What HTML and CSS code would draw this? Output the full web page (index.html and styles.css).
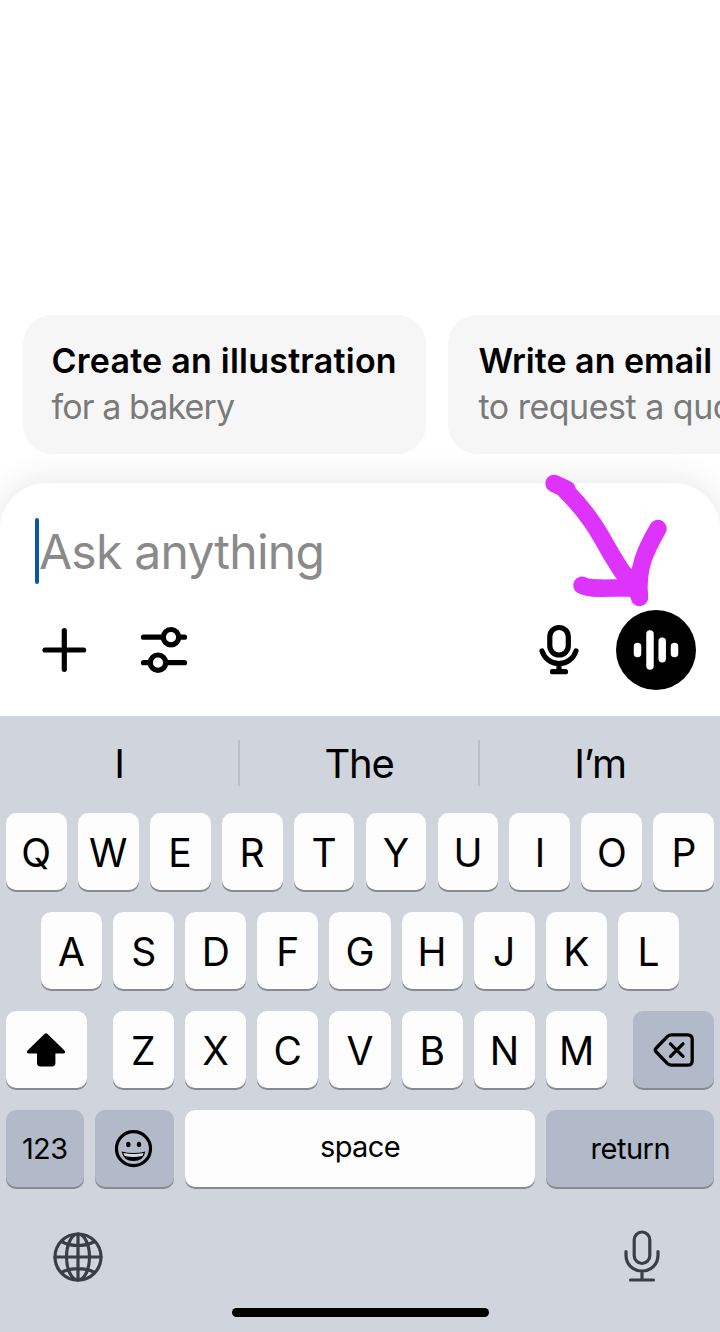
FILE: index.html
```html
<!DOCTYPE html>
<html lang="en">
<head>
<meta charset="utf-8">
<title>Chat</title>
<link rel="stylesheet" href="styles.css">
</head>
<body>
<main class="screen">
  <section class="suggestions">
    <article class="card"><h2 class="card-title">Create an illustration</h2><p class="card-sub">for a bakery</p></article>
    <article class="card card-next"><h2 class="card-title title-next">Write an email</h2><p class="card-sub sub-next">to request a quote</p></article>
  </section>

  <section class="composer">
    <div class="field"><span class="caret"></span><span class="placeholder">Ask anything</span></div>
    <div class="tools">
      <svg class="icon-plus" width="44" height="44" viewBox="0 0 44 44"><path d="M22.300 2.700v38.600M3 22h38.600"/></svg>
      <svg class="icon-sliders" width="48" height="48" viewBox="0 0 48 48"><path d="M3.500 11.200h19M39.500 11.200h5M3.500 36.700h5M26 36.700h18.500"/><circle cx="31" cy="11.200" r="7.700"/><circle cx="18" cy="36.700" r="7.700"/></svg>
      <svg class="icon-mic" width="40" height="50" viewBox="0 0 40 50"><rect x="9.800" y="2.500" width="18.500" height="27.500" rx="9.250"/><path d="M2 26c2.500 7.500 9 12.700 17 12.700S33.500 33.500 36 26M19 39v7M12.500 46.700h13"/></svg>
      <div class="voice">
        <svg width="46" height="40" viewBox="0 0 46 40"><path d="M4.500 16.500v7M17 4v32M29.200 11.200v17.600M41.500 16.500v7"/></svg>
      </div>
    </div>
  </section>

  <section class="keyboard">
    <div class="predictions"><span>I</span><span>The</span><span>I’m</span></div>
    <div class="row row-top"><b>Q</b><b>W</b><b>E</b><b>R</b><b>T</b><b>Y</b><b>U</b><b>I</b><b>O</b><b>P</b></div>
    <div class="row row-home"><b>A</b><b>S</b><b>D</b><b>F</b><b>G</b><b>H</b><b>J</b><b>K</b><b>L</b></div>
    <div class="row row-shift">
      <b class="shift"><svg width="40" height="36" viewBox="0 0 40 36"><path d="M18.200 2.200q1.800-1.700 3.600 0L38.500 18.500q1.600 3-1 3H29.400V31q0 3.400-3.400 3.400H14.400Q11 34.400 11 31V21.500H2.500q-2.600 0-1-3z"/></svg></b>
      <div class="letters"><b>Z</b><b>X</b><b>C</b><b>V</b><b>B</b><b>N</b><b>M</b></div>
      <b class="dark delete"><svg width="42" height="36" viewBox="0 0 42 36"><path d="M18.500 2.800h16.200q4.500 0 4.500 4.500v21.400q0 4.500-4.500 4.500H18.500q-2.300 0-4-1.600L3.300 20q-2-2 0-4L14.500 4.400q1.700-1.600 4-1.600z"/><path d="m17.500 11.800 12.500 12.500m0-12.500-12.500 12.500"/></svg></b>
    </div>
    <div class="row row-bottom">
      <b class="dark num">123</b>
      <b class="dark emoji"><svg width="38" height="38" viewBox="0 0 38 38"><circle cx="18.500" cy="18.700" r="17" class="face"/><ellipse cx="13.300" cy="14.500" rx="2.200" ry="2.700"/><ellipse cx="24" cy="14.500" rx="2.200" ry="2.700"/><path d="M6.700 21.500q11.800 3 23.600 0-1.600 9.600-11.800 9.600T6.700 21.500z"/><path class="teeth" d="M8.500 22.900q10 2.300 20 0-.4 2.300-1.500 3.200-8.500 1.800-17 0-1.100-.9-1.500-3.200z"/></svg></b>
      <b class="space">space</b>
      <b class="dark return">return</b>
    </div>
    <div class="footer">
      <svg class="globe" width="50" height="50" viewBox="0 0 50 50"><circle cx="25" cy="25" r="23"/><ellipse cx="25" cy="25" rx="11.500" ry="23"/><path d="M25 2v46M2 25h46M8.500 9.500c9 5.300 24 5.300 33 0M8.500 40.500c9-5.300 24-5.300 33 0"/></svg>
      <svg class="dictate" width="36" height="54" viewBox="0 0 36 54"><rect x="10.200" y="2" width="15.600" height="31.500" rx="7.800"/><path d="M2 21.500v3.500c0 9 6.500 16 16 16s16-7 16-16v-3.500M18 41v9M6.500 50h23"/></svg>
    </div>
    <div class="home"></div>
  </section>

  <svg class="arrow" width="720" height="300" viewBox="0 450 720 300"><g>
    <path d="M554 483.500 567 489.500"/>
    <path d="M565.500 490.500C581 506 592 520 602 538C614 560 625 577 637 592"/>
    <path d="M658 528.500C645 551 636.500 569 639.500 597.500"/>
    <path d="M582 585.300C590 590 606 587.500 637 588"/>
    <path d="M630 577l5 10"/>
  </g></svg>
</main>
</body>
</html>
```
FILE: styles.css
```css
* { box-sizing: border-box; }
body { margin: 0; background: #fff; font-family: Inter, "Liberation Sans", sans-serif; }
.screen { position: relative; width: 720px; height: 1332px; overflow: hidden; display: flex; flex-direction: column; }

.suggestions { display: flex; gap: 22px; height: 483px; flex: none; padding: 315px 0 0 22.500px; }
.card { flex: none; width: 403.500px; height: 138.500px; border-radius: 29px; background: #f6f6f6; padding: 23px 29px; white-space: nowrap; }
.card-next { padding-left: 30.500px; }
.card-title { margin: 0; font-size: 34px; line-height: 46px; font-weight: 600; letter-spacing: 0.230px; }
.title-next { letter-spacing: 0; }
.card-sub { margin: 0; font-size: 34px; line-height: 46px; color: #7a7a7a; letter-spacing: -0.900px; }
.sub-next { letter-spacing: -0.500px; }

.composer { position: relative; flex: none; height: 233px; background: #fff; border-radius: 46px 46px 0 0; padding: 35px 24.500px 0 35px; box-shadow: 0 -4px 32px rgba(0,0,0,.09); }
.field { display: flex; align-items: center; height: 66px; }
.caret { width: 4px; height: 66px; border-radius: 2px; background: #0957a8; }
.placeholder { font-size: 48px; color: #8a8a8a; letter-spacing: -0.750px; white-space: nowrap; }
.tools { display: flex; align-items: center; height: 80px; margin-top: 25.500px; padding-left: 7px; }
.tools svg { fill: none; stroke: #000; stroke-width: 5.200; stroke-linecap: round; flex: none; overflow: visible; }
.icon-sliders { margin-left: 54px; }
.icon-mic { margin-left: auto; }
.voice { width: 80px; height: 80px; margin-left: 36px; border-radius: 50%; background: #000; display: flex; align-items: center; justify-content: center; }
.tools .voice svg { stroke: #fff; stroke-width: 7.500; }

.keyboard { position: relative; flex: 1; background: #d0d4dc; display: flex; flex-direction: column; }
.predictions { display: flex; height: 97.400px; padding-top: 24px; }
.predictions span { width: 240px; height: 46px; line-height: 47px; text-align: center; font-size: 40px; letter-spacing: -1.300px; }
.predictions span:not(:last-child) { border-right: 2px solid #bcc0c6; }
.row { display: flex; height: 77px; margin-bottom: 22px; padding: 0 5.700px; gap: 11.050px; flex: none; }
.row b { flex: 1; height: 77px; border-radius: 10px; background: #fdfdfd; box-shadow: 0 2px 0 #898a8f; display: flex; align-items: center; justify-content: center; font-size: 39px; font-weight: 400; padding-top: 1px; }
.row-home { padding: 0 41px; }
.row .shift, .row .delete { flex: 0 0 81px; }
.row-shift { gap: 26px; }
.letters { display: flex; gap: 11.050px; flex: 1; }
.row .dark { background: #b2b9c8; }
.delete svg { fill: none; stroke: #000; stroke-width: 3.300; stroke-linecap: round; }
.row .num, .row .space, .row .return { font-size: 29px; letter-spacing: -0.600px; padding-top: 0; }
.row .num { flex: 0 0 78px; }
.row .emoji { flex: 0 0 79px; }
.row .space { flex: 1; padding-bottom: 5px; }
.row .return { flex: 0 0 168px; letter-spacing: -0.500px; }
.face { fill: none; stroke: #000; stroke-width: 3.200; }
.teeth { fill: #d6dbe5; }
.footer { display: flex; justify-content: space-between; align-items: center; height: 54px; margin-top: 21px; padding: 0 60px 0 53px; }
.footer svg { fill: none; stroke: #3b3e44; stroke-width: 3.200; stroke-linecap: round; }
.home { width: 257px; height: 9px; border-radius: 5px; background: #000; margin: 23.500px auto 0; }

.arrow { position: absolute; left: 0; top: 450px; pointer-events: none; }
.arrow g { fill: none; stroke: #dd33fd; stroke-width: 17.500; stroke-linecap: round; stroke-linejoin: round; }
```
